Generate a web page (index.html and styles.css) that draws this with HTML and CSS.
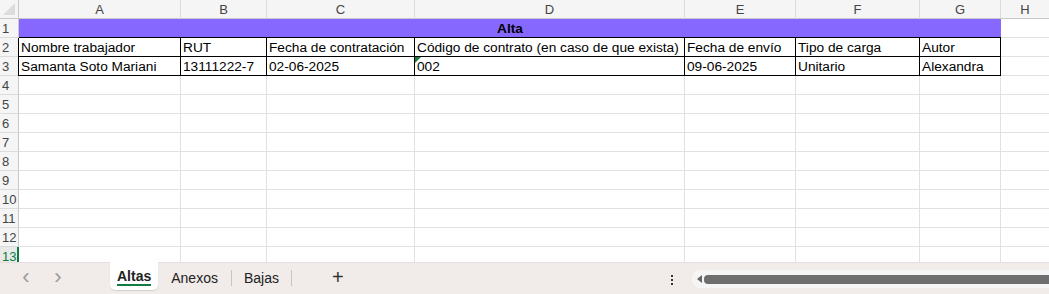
FILE: index.html
```html
<!DOCTYPE html>
<html lang="es">

<head>
    <meta charset="UTF-8">
    <meta name="viewport" content="width=device-width, initial-scale=1.0">
    <title>Altas</title>
    <link rel="stylesheet" href="styles.css">
</head>

<body>
    <div class="sheet">
        <!-- Cabecera de columnas -->
        <div class="corner"><span class="corner-tri"></span></div>
        <div class="col-head">A</div>
        <div class="col-head">B</div>
        <div class="col-head">C</div>
        <div class="col-head">D</div>
        <div class="col-head">E</div>
        <div class="col-head">F</div>
        <div class="col-head">G</div>
        <div class="col-head">H</div>

        <!-- Fila 1 -->
        <div class="row-head">1</div>
        <div class="cell title">Alta</div>
        <div class="cell"></div>

        <!-- Fila 2 -->
        <div class="row-head">2</div>
        <div class="cell boxed first">Nombre trabajador</div>
        <div class="cell boxed">RUT</div>
        <div class="cell boxed">Fecha de contratación</div>
        <div class="cell boxed">Código de contrato (en caso de que exista)</div>
        <div class="cell boxed">Fecha de envío</div>
        <div class="cell boxed">Tipo de carga</div>
        <div class="cell boxed">Autor</div>
        <div class="cell"></div>

        <!-- Fila 3 -->
        <div class="row-head">3</div>
        <div class="cell boxed first">Samanta Soto Mariani</div>
        <div class="cell boxed">13111222-7</div>
        <div class="cell boxed">02-06-2025</div>
        <div class="cell boxed flag">002</div>
        <div class="cell boxed">09-06-2025</div>
        <div class="cell boxed">Unitario</div>
        <div class="cell boxed">Alexandra</div>
        <div class="cell"></div>
    </div>
    <div class="sheet empty" id="empty-rows"></div>

    <div class="tabbar">
        <div class="nav">
            <span class="arrow">&lsaquo;</span>
            <span class="arrow">&rsaquo;</span>
        </div>
        <div class="tabs">
            <div class="tab active">Altas</div>
            <div class="tab">Anexos</div>
            <div class="tab">Bajas</div>
            <div class="add">+</div>
        </div>
        <div class="more">
            <span></span><span></span><span></span>
        </div>
        <div class="hscroll">
            <span class="left-tri"></span>
            <span class="thumb"></span>
        </div>
    </div>

    <script>
        // Filas vacías 4 a 13
        const empty = document.getElementById('empty-rows');
        for (let r = 4; r <= 13; r++) {
            const head = document.createElement('div');
            head.className = r === 13 ? 'row-head selected' : 'row-head';
            head.textContent = r;
            empty.appendChild(head);
            for (let c = 0; c < 8; c++) {
                const cell = document.createElement('div');
                cell.className = 'cell';
                empty.appendChild(cell);
            }
        }
    </script>
</body>

</html>
```

FILE: styles.css
```css
body {
    margin: 0;
    padding: 0;
    width: 1049px;
    height: 294px;
    overflow: hidden;
    background: #fff;
    font-family: "Liberation Sans", Arial, sans-serif;
    color: #000;
}

.sheet {
    display: grid;
    grid-template-columns: 19px 162px 86px 148px 270px 111px 124px 81px 49px;
    grid-auto-rows: 19px;
}

.sheet.empty {
    height: 186px;
    overflow: hidden;
    align-content: start;
}

.corner,
.col-head,
.row-head {
    box-sizing: border-box;
    background: #f5f5f5;
    color: #444;
    font-size: 13px;
    border-right: 1px solid #dcdcdc;
    border-bottom: 1px solid #dcdcdc;
    display: flex;
    align-items: center;
    justify-content: center;
}

.col-head {
    border-bottom: 1px solid #c8c8c8;
    padding-top: 1px;
}

.row-head {
    justify-content: flex-start;
    padding-left: 2px;
    border-right: 1px solid #c8c8c8;
}

.row-head.selected {
    color: #107c41;
    background: #e9e9e9;
    border-right: 2px solid #107c41;
}

.corner {
    position: relative;
    border-right: 1px solid #c8c8c8;
    border-bottom: 1px solid #c8c8c8;
}

.corner-tri {
    position: absolute;
    right: 3px;
    bottom: 3px;
    width: 0;
    height: 0;
    border-left: 12px solid transparent;
    border-bottom: 12px solid #dcdcdc;
}

.cell {
    box-sizing: border-box;
    border-right: 1px solid #e1e1e1;
    border-bottom: 1px solid #e1e1e1;
    font-size: 13.7px;
    padding: 1px 2px 0;
    white-space: nowrap;
    overflow: hidden;
    line-height: 17px;
}

.cell.title {
    grid-column: span 7;
    background: #8668fe;
    font-weight: bold;
    text-align: center;
    border-right: none;
    border-bottom: 1px solid #000;
}

.cell.boxed {
    border-right: 1px solid #000;
    border-bottom: 1px solid #000;
}

.cell.first {
    border-left: 1px solid #000;
    margin-left: -1px;
}

.cell.flag {
    position: relative;
}

.cell.flag::before {
    content: "";
    position: absolute;
    left: 0;
    top: 0;
    border-top: 6px solid #1e7e34;
    border-right: 6px solid transparent;
}

/* Barra de hojas */
.tabbar {
    height: 32px;
    background: #f1ebe9;
    border-top: 1px solid #e4dede;
    box-sizing: border-box;
    display: flex;
    align-items: stretch;
    font-size: 14px;
    color: #222;
}

.nav {
    width: 110px;
    display: flex;
    align-items: center;
    gap: 20px;
    padding-left: 20px;
    box-sizing: border-box;
}

.arrow {
    font-size: 22px;
    color: #9a9a9a;
    width: 12px;
    text-align: center;
    line-height: 20px;
    margin-top: -4px;
}

.tabs {
    display: flex;
    align-items: center;
    width: 552px;
}

.tab {
    height: 100%;
    display: flex;
    align-items: center;
    padding: 0 13px;
    position: relative;
    margin-top: -1px;
}

.tab + .tab::before {
    content: "";
    position: absolute;
    left: 0;
    top: 7px;
    height: 16px;
    border-left: 1px solid #c9c4c2;
}

.tab.active {
    background: #fff;
    font-weight: bold;
    padding: 0 7px;
    border-radius: 0 0 5px 5px;
    box-shadow: 0 1px 1px rgba(0, 0, 0, 0.12);
    height: 28px;
    align-self: flex-start;
}

.tab.active::after {
    content: "";
    position: absolute;
    left: 7px;
    right: 7px;
    bottom: 4px;
    border-bottom: 2px solid #107c41;
}

.tab.active + .tab::before {
    display: none;
}

.tab:nth-child(3)::after {
    content: "";
    position: absolute;
    right: 0;
    top: 7px;
    height: 16px;
    border-left: 1px solid #c9c4c2;
}

.add {
    margin-left: 40px;
    font-size: 20px;
    font-weight: 300;
    color: #333;
    margin-top: -3px;
}

.more {
    width: 20px;
    display: flex;
    flex-direction: column;
    align-items: center;
    justify-content: center;
    gap: 2px;
    margin-top: 2px;
}

.more span {
    width: 2px;
    height: 2px;
    background: #333;
}

.hscroll {
    flex: 1;
    margin: 7px 0 6px 10px;
    background: #f6f5f5;
    border-radius: 8px 0 0 8px;
    display: flex;
    align-items: center;
    padding-left: 5px;
}

.left-tri {
    width: 0;
    height: 0;
    border-top: 4px solid transparent;
    border-bottom: 4px solid transparent;
    border-right: 5px solid #666;
}

.thumb {
    flex: 1;
    height: 9px;
    margin-left: 2px;
    background: #6e6e6e;
    border-radius: 4px 0 0 4px;
}
```
